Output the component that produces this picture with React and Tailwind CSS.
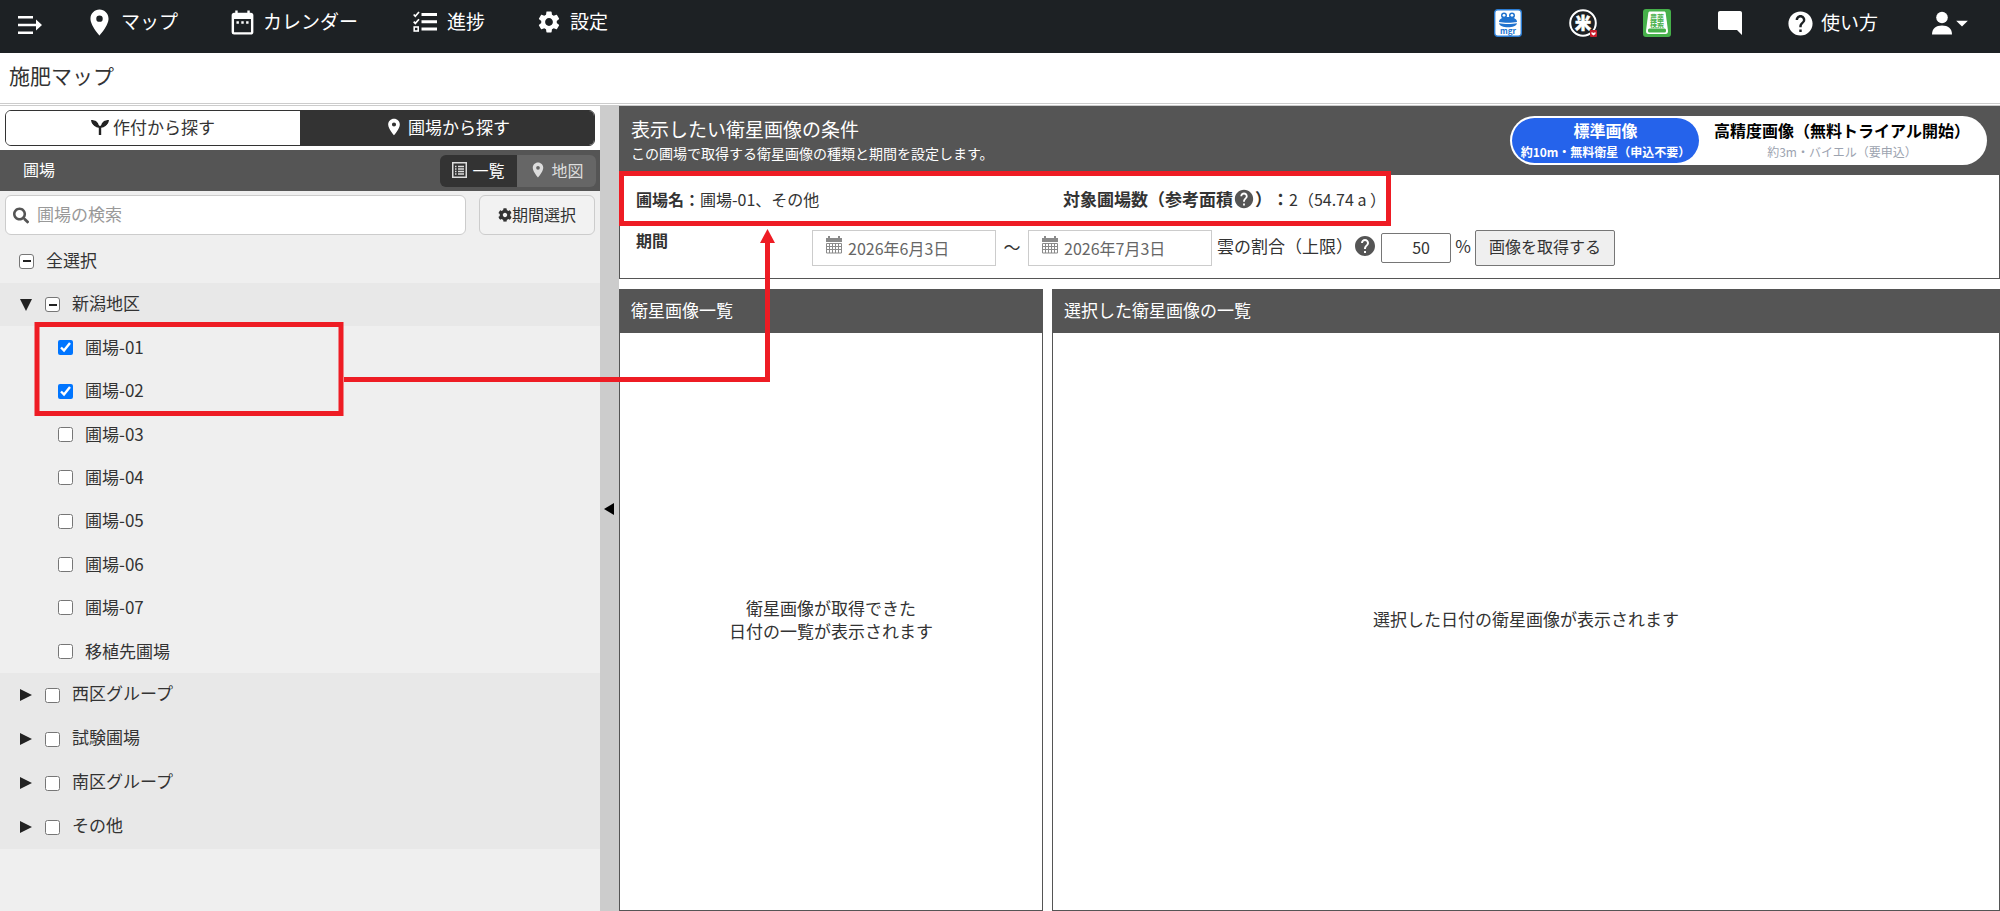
import React, { useState } from "react";
import {
  MdPlace,
  MdDateRange,
  MdSettings,
  MdHelp,
  MdArrowDropDown,
} from "react-icons/md";
import { FaSearch, FaCog } from "react-icons/fa";

const fields = [
  "圃場-01",
  "圃場-02",
  "圃場-03",
  "圃場-04",
  "圃場-05",
  "圃場-06",
  "圃場-07",
  "移植先圃場",
];

const groups = ["西区グループ", "試験圃場", "南区グループ", "その他"];

const MenuIcon = () => (
  <svg viewBox="0 0 24 20" className="h-5 w-6" fill="#fff">
    <path d="M0 1h15v2.600H0zM0 8.700h18v2.600H0zM0 16.400h15V19H0zM18 4.500 24 10l-6 5.500z" />
  </svg>
);

const ChecklistIcon = () => (
  <svg viewBox="0 0 24 22" className="h-[22px] w-6" fill="none" stroke="#fff">
    <path d="M8.500 3.500H24M8.500 10.700H24M8.500 18H24" strokeWidth="3" />
    <path d="M.7 3.500l1.600 1.700L6 1M.7 10.700l1.600 1.700L6 8.300" strokeWidth="1.700" />
    <rect x="1.200" y="16" width="4" height="4" strokeWidth="1.600" />
  </svg>
);

const FrogIcon = () => (
  <svg viewBox="0 0 28 28" className="h-7 w-7">
    <rect x="0.700" y="0.700" width="26.600" height="26.600" rx="3" fill="#fff" stroke="#2b7cd3" strokeWidth="1.400" />
    <g fill="#2173cf">
      <circle cx="10" cy="6.500" r="3" />
      <circle cx="18" cy="6.500" r="3" />
      <path d="M5 13c0-3.500 4-5 9-5s9 1.500 9 5c-5 1-13 1-18 0z" />
      <path d="M5 14.300c5 1 13 1 18 0-.5 2.700-4.500 4-9 4s-8.500-1.300-9-4z" />
    </g>
    <circle cx="10" cy="6.300" r="1.400" fill="#fff" />
    <circle cx="18" cy="6.300" r="1.400" fill="#fff" />
    <text x="14" y="25" textAnchor="middle" fontSize="8" fontWeight="700" fill="#2173cf">
      mgr
    </text>
  </svg>
);

const RiceIcon = () => (
  <svg viewBox="0 0 28 28" className="h-7 w-7">
    <circle cx="14" cy="14" r="12.800" fill="none" stroke="#fff" strokeWidth="2" />
    <text x="14" y="20" textAnchor="middle" fontSize="16" fontWeight="900" fill="#fff" stroke="#fff" strokeWidth="0.600">
      米
    </text>
    <rect x="21" y="21" width="7" height="7" rx="1" fill="#c81e2d" />
    <path d="M22.500 23l2 1 2-1v2l-2 1.500-2-1.500z" fill="#fff" />
  </svg>
);

const BookIcon = () => (
  <svg viewBox="0 0 28 28" className="h-7 w-7">
    <rect width="28" height="28" rx="3" fill="#46b04a" />
    <path d="M7 2.500h14c1 0 1.500.5 1.700 1.500L25 22c0 2-.8 3-2.500 3h-17C3.800 25 3 24 3 22L5.300 4c.2-1 .7-1.500 1.700-1.500z" fill="#fff" />
    <rect x="5" y="19.500" width="18" height="4" rx="1.500" fill="#46b04a" />
    <text x="14" y="10.500" textAnchor="middle" fontSize="7" fontWeight="700" fill="#46b04a">
      農薬
    </text>
    <text x="14" y="17.500" textAnchor="middle" fontSize="7" fontWeight="700" fill="#46b04a">
      検索
    </text>
  </svg>
);

const ChatIcon = () => (
  <svg viewBox="0 0 24 24" className="size-6" fill="#fff">
    <path d="M2 0h20c1.200 0 2 .8 2 2v22l-5-5H2c-1.200 0-2-.8-2-2V2C0 .8.8 0 2 0z" />
  </svg>
);

const UserIcon = () => (
  <svg viewBox="0 0 20 24" className="h-6 w-5" fill="#fff">
    <circle cx="10" cy="6.500" r="5.800" />
    <path d="M0 23.500c0-6 4-9 10-9s10 3 10 9z" />
  </svg>
);

const SproutIcon = () => (
  <svg viewBox="0 0 18 17" className="h-[17px] w-[18px]" fill="#222">
    <path d="M0 1c4.500 0 7.500 2 8 6.500C3.500 7.500.5 5.500 0 1zM18 1c-.5 4.500-3.500 6.500-8 6.500C10.500 3 13.500 1 18 1z" />
    <path d="M1 2.500c1 4 3.500 6 6.800 6.300V16h2.400V8.800C13.500 8.500 16 6.500 17 2.500L9 7z" />
  </svg>
);

const DateIcon = () => (
  <svg viewBox="0 0 16 18" className="mb-1.5 h-[18px] w-4" fill="#8a8a8a">
    <path d="M0 2h2V0h2v2h8V0h2v2h2v4H0z" />
    <path
      d="M.5 7.500h15v9.500H.5zM.5 10.500h15M.5 13.500h15M3.500 7.500V17M6.500 7.500V17M9.500 7.500V17M12.500 7.500V17"
      fill="none"
      stroke="#8a8a8a"
    />
  </svg>
);

const ListIcon = () => (
  <svg viewBox="0 0 15 16" className="h-4 w-[15px]" fill="none" stroke="#ddd">
    <rect x="0.750" y="0.750" width="13.500" height="14.500" strokeWidth="1.500" />
    <path d="M3 4.500h1.500M3 7h1.500M3 9.500h1.500M3 12h1.500M6 4.500h6M6 7h6M6 9.500h6M6 12h6" strokeWidth="1.300" />
  </svg>
);

const Arrow = ({ open }) => (
  <svg viewBox="0 0 12 12" className="size-3" fill="#222">
    <path d={open ? "M0 0h12L6 12z" : "M0 0l12 6-12 6z"} />
  </svg>
);

const PartialCheckbox = () => (
  <input
    type="checkbox"
    className="grid size-[15px] appearance-none place-items-center rounded-[3px] border border-[#767676] bg-white before:h-[2px] before:w-2 before:bg-[#222] before:content-['']"
  />
);

const Header = () => (
  <header className="flex h-[53px] items-start justify-between bg-[#1d2124] text-[19px] leading-[42px] text-white">
    <nav className="flex items-start">
      <button aria-label="メニュー" className="flex h-[50px] w-[84px] items-center pl-[18px]">
        <MenuIcon />
      </button>
      <a href="#map" className="flex h-11 w-[144px] items-center gap-[6px]">
        <MdPlace className="size-[31px]" />
        <span className="pb-0.5">マップ</span>
      </a>
      <a href="#calendar" className="flex h-11 w-[185px] items-center gap-[6px]">
        <MdDateRange className="size-[29px]" />
        <span className="pb-0.5">カレンダー</span>
      </a>
      <a href="#progress" className="flex h-11 w-[123px] items-center gap-[10px]">
        <ChecklistIcon />
        <span className="pb-0.5">進捗</span>
      </a>
      <a href="#settings" className="flex h-11 items-center gap-2">
        <MdSettings className="size-[26px]" />
        <span className="pb-0.5">設定</span>
      </a>
    </nav>
    <div className="flex h-[46px] items-center pr-6">
      <a href="#mgr" aria-label="mgr" className="mr-[47px]"><FrogIcon /></a>
      <a href="#rice" aria-label="米" className="mr-[46px]"><RiceIcon /></a>
      <a href="#pesticide" aria-label="農薬検索" className="mr-[47px]"><BookIcon /></a>
      <button aria-label="メッセージ" className="mr-11">
        <ChatIcon />
      </button>
      <a href="#help" className="mr-[54px] flex items-center gap-[6px]">
        <MdHelp className="size-[29px]" />
        <span className="pb-0.5">使い方</span>
      </a>
      <button aria-label="アカウント" className="flex items-center">
        <UserIcon />
        <MdArrowDropDown className="-ml-1 size-7" />
      </button>
    </div>
  </header>
);

const Sidebar = () => {
  const [checked, setChecked] = useState(["圃場-01", "圃場-02"]);

  const toggle = (name) => {
    setChecked((prev) =>
      prev.includes(name) ? prev.filter((n) => n !== name) : [...prev, name]
    );
  };

  return (
    <aside className="w-[30%] bg-[#efefef] text-[#333]">
      {/* Search mode tabs */}
      <div className="bg-white px-[5px] py-1">
        <div className="flex h-9 overflow-hidden rounded-md border border-[#333]">
          <button className="flex flex-1 items-center justify-center gap-1 bg-white pb-0.5">
            <SproutIcon />
            作付から探す
          </button>
          <button className="flex flex-1 items-center justify-center gap-1 bg-[#333] pb-0.5 text-white">
            <MdPlace className="size-5" />
            圃場から探す
          </button>
        </div>
      </div>

      <div className="flex h-[41px] items-center justify-between bg-[#555] pr-1 pl-[23px] text-white">
        <h2 className="pb-1 text-[16px]">圃場</h2>
        <div className="flex h-8 overflow-hidden rounded-md">
          <button className="flex w-[77px] items-center justify-center gap-[5px] bg-[#333] pb-0.5 text-[16px]">
            <ListIcon />
            一覧
          </button>
          <button className="flex w-[79px] items-center justify-center gap-1 bg-[#666] pb-0.5 text-[16px] text-[#ddd]">
            <MdPlace className="size-[18px]" />
            地図
          </button>
        </div>
      </div>

      <div className="flex gap-[13px] px-[5px] pt-1">
        <label className="flex h-10 flex-1 items-center gap-2 rounded-md border border-[#ccc] bg-white pl-[7px]">
          <FaSearch className="size-[17px] text-[#555]" />
          <input
            type="text"
            aria-label="圃場の検索"
            placeholder="圃場の検索"
            className="w-full bg-transparent pb-0.5 outline-none placeholder:text-[#999]"
          />
        </label>
        <button className="flex h-10 w-[116px] items-center justify-center rounded-md border border-[#ccc] bg-[#f2f2f2] text-[16px]">
          <FaCog className="size-[14px]" />
          <span className="pb-0.5">期間選択</span>
        </button>
      </div>

      {/* Field tree */}
      <label className="flex h-12 items-center gap-3 pt-1 pl-[19px]">
        <PartialCheckbox />
        <span className="pb-0.5">全選択</span>
      </label>
      <div className="flex h-[43px] items-center bg-[#e8e8e8] pl-5">
        <button aria-label="新潟地区を閉じる" className="mr-[13px]">
          <Arrow open />
        </button>
        <label className="flex items-center gap-3">
          <PartialCheckbox />
          <span className="pb-1">新潟地区</span>
        </label>
      </div>
      <div className="grid h-[347px] auto-rows-fr">
        {fields.map((name) => (
          <label key={name} className="flex items-center gap-3 pl-[58px]">
            <input
              type="checkbox"
              className="size-[15px]"
              checked={checked.includes(name)}
              onChange={() => toggle(name)}
            />
            <span className="pb-0.5">{name}</span>
          </label>
        ))}
      </div>
      {groups.map((name) => (
        <div key={name} className="flex h-11 items-center bg-[#e8e8e8] pl-5">
          <button aria-label={`${name}を開く`} className="mr-[13px]">
            <Arrow />
          </button>
          <label className="flex items-center gap-3">
            <input type="checkbox" className="size-[15px]" />
            <span className="pb-1">{name}</span>
          </label>
        </div>
      ))}
    </aside>
  );
};

const DateField = ({ label, value }) => (
  <label className="flex h-9 w-[184px] items-center gap-[6px] border border-[#ccc] bg-white pl-[13px]">
    <DateIcon />
    <input
      type="text"
      aria-label={label}
      defaultValue={value}
      className="w-[120px] text-[16px] text-[#666] outline-none"
    />
  </label>
);

const ImageTypeSwitch = () => (
  <div className="flex h-[49px] rounded-full bg-white p-[2px] text-[16px]">
    <button className="w-[187px] rounded-full bg-[#2563eb] font-bold text-white">
      <span className="block leading-[22px]">標準画像</span>
      <span className="block text-[12px] leading-[22px]">約10m・無料衛星（申込不要）</span>
    </button>
    <button className="w-[286px] rounded-full text-black">
      <span className="block leading-[22px] font-bold">高精度画像（無料トライアル開始）</span>
      <span className="block text-[12px] leading-[22px] text-[#9ca3af]">約3m・バイエル（要申込）</span>
    </button>
  </div>
);

const ResultPanel = ({ title, className, children }) => (
  <section className={`flex flex-col border border-[#555] ${className}`}>
    <h2 className="flex h-[43px] shrink-0 items-center bg-[#555] pb-1 pl-[11px] text-white">{title}</h2>
    <div className="flex flex-1 items-center justify-center pb-1.5 text-center leading-[23px]">
      <p>{children}</p>
    </div>
  </section>
);

const Main = () => (
  <main className="flex flex-1 flex-col text-[#333]">
    <section className="border border-t-0 border-[#555]">
      <div className="flex h-[69px] items-center justify-between bg-[#555] pr-3 pl-[11px] text-white">
        <div className="pb-0.5">
          <h2 className="text-[19px] leading-[26px]">表示したい衛星画像の条件</h2>
          <p className="text-[14px] leading-[22px]">
            この圃場で取得する衛星画像の種類と期間を設定します。
          </p>
        </div>
        <ImageTypeSwitch />
      </div>
      <div className="flex h-[50px] items-center pb-0.5 pl-4 text-[16px]">
        <p className="w-[427px]">
          <strong>圃場名：</strong>圃場-01、その他
        </p>
        <p className="flex items-center">
          <strong className="flex items-center text-[17px]">
            対象圃場数（参考面積
            <MdHelp className="size-[22px] text-[#555]" />
            ）：
          </strong>
          2（54.74 a ）
        </p>
      </div>
      <div className="flex h-[53px] items-start pt-[5px] pl-4">
        <strong className="w-[176px] text-[16px] leading-[20px]">期間</strong>
        <DateField label="開始日" value="2026年6月3日" />
        <span className="w-8 text-center leading-[34px]">～</span>
        <DateField label="終了日" value="2026年7月3日" />
        <label htmlFor="cloud" className="ml-[5px] flex items-center leading-[32px]">
          雲の割合（上限）
          <MdHelp className="mr-1 size-6 text-[#555]" />
        </label>
        <input
          id="cloud"
          type="text"
          defaultValue="50"
          className="mt-[3px] h-[30px] w-[70px] rounded-xs border border-[#767676] pr-5 pb-0.5 text-right text-[16px] outline-none"
        />
        <span className="w-6 text-center leading-[32px]">%</span>
        <button className="h-9 w-[140px] rounded-xs border border-[#767676] bg-[#efefef] pb-1 text-[16px]">
          画像を取得する
        </button>
      </div>
    </section>
    <div className="mt-[10px] flex flex-1 gap-[9px]">
      <ResultPanel title="衛星画像一覧" className="w-[424px]">
        衛星画像が取得できた
        <br />
        日付の一覧が表示されます
      </ResultPanel>
      <ResultPanel title="選択した衛星画像の一覧" className="flex-1">
        選択した日付の衛星画像が表示されます
      </ResultPanel>
    </div>
  </main>
);

// Red guide lines drawn over the page
const Guide = () => (
  <svg
    className="pointer-events-none absolute inset-0 h-full w-full"
    fill="none"
    stroke="#ee1c24"
    strokeWidth="5"
  >
    <rect x="37" y="324.500" width="304" height="89" />
    <rect x="621.500" y="173.500" width="767" height="50" />
    <path d="M344 379.500H767.500V242" />
    <path d="M767.500 229l7.500 14h-15z" fill="#ee1c24" stroke="none" />
  </svg>
);

const App = () => {
  return (
    <div className="relative flex min-h-screen flex-col bg-white font-['Noto_Sans_CJK_JP',sans-serif] text-[17px] [text-spacing-trim:space-all]">
      <Header />
      <h1 className="h-[50px] pl-[9px] text-[21px] leading-[44px] text-[#333]">施肥マップ</h1>
      <div className="h-[3px] border-y border-[#ccc]" />
      <div className="flex flex-1">
        <Sidebar />
        <button
          aria-label="一覧を閉じる"
          className="flex w-[19px] items-center justify-center bg-[#ccc] pr-0.5"
        >
          <svg viewBox="0 0 10 12" className="h-3 w-[10px]" fill="#000">
            <path d="M10 0v12L0 6z" />
          </svg>
        </button>
        <Main />
      </div>
      <Guide />
    </div>
  );
};

export default App;
